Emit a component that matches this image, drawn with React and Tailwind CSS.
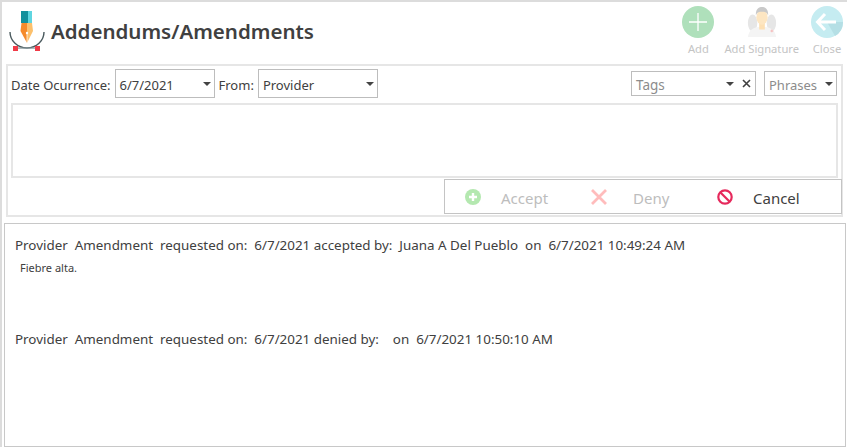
import React from 'react';

const font = { fontFamily: '"Noto Sans", "Open Sans", sans-serif' };

function PenLogo() {
  return (
    <svg width="36" height="42" viewBox="0 0 36 42" className="shrink-0">
      <path d="M1 21 A17 16 0 0 0 35 21" fill="none" stroke="#4a5a5e" strokeWidth="1.4" />
      <rect x="12" y="0" width="7" height="12" fill="#12909c" />
      <rect x="19" y="0" width="4" height="12" fill="#5fd5e0" />
      <path d="M12.5 12 H18 V32 L11.5 20 Z" fill="#f58a2a" />
      <path d="M18 12 H23 L24 20 L18 32 Z" fill="#fcc06c" />
      <path d="M18 22 V32" stroke="#fff" strokeWidth="0.7" />
      <circle cx="18" cy="22" r="1.2" fill="#fff" />
      <rect x="7" y="36.5" width="22" height="1.2" fill="#8a9a9e" />
      <rect x="4" y="35" width="5" height="5" fill="#f03a47" />
      <rect x="26" y="35" width="5" height="5" fill="#f03a47" />
    </svg>
  );
}

function DoctorIcon() {
  return (
    <svg width="32" height="32" viewBox="0 0 34 34">
      <ellipse cx="7" cy="18" rx="5" ry="9" fill="#e6e6e6" />
      <ellipse cx="27" cy="18" rx="5" ry="9" fill="#e6e6e6" />
      <path d="M2 33 C3 24 10 22 17 22 C24 22 31 24 32 33 Z" fill="#f4f4f4" />
      <rect x="14" y="16" width="6" height="9" fill="#fde0b4" />
      <ellipse cx="17" cy="12" rx="6" ry="8" fill="#fde6c2" />
      <path d="M10.5 10 C10 3 14 1 17 1 C20 1 24 3 23.5 10 C22 6 20 6 17 6 C14 6 12 6 10.5 10 Z" fill="#c9c9c9" />
      <path d="M26 26 h1 v-1 h1 v1 h1 v1 h-1 v1 h-1 v-1 h-1 Z" fill="#f5b5b5" />
    </svg>
  );
}

function ToolButton({ label, children, className = '' }) {
  return (
    <div className={`flex flex-col items-center gap-[3px] text-[11.2px] leading-[16px] text-[#c4c4c4] ${className}`}>
      {children}
      <span>{label}</span>
    </div>
  );
}

function Caret() {
  return <span className="w-0 h-0 border-x-[4px] border-x-transparent border-t-[4px] border-t-[#444]" />;
}

function Select({ value, className, muted }) {
  return (
    <div className={`flex items-center justify-between pl-[4px] pr-[3px] border border-[#bdbdbd] text-[13px] ${muted ? 'text-[#8c8c8c]' : 'text-[#404040]'} ${className}`}>
      <span className="pt-[4px]">{value}</span>
      <Caret />
    </div>
  );
}

function ActionButton({ icon, label, className, iconWidth = 'w-[36px]' }) {
  return (
    <div className={`flex items-center ${className}`}>
      <span className={`${iconWidth} flex`}>{icon}</span>
      <span className="pt-[4px]">{label}</span>
    </div>
  );
}

export default function App() {
  return (
    <div style={font} className="w-[847px] h-[447px] overflow-hidden bg-white border-t-2 border-l-2 border-[#dcdcdc] flex flex-col text-[#404040]">
      <header className="h-[62px] shrink-0 flex items-start justify-between pr-[4px]">
        <div className="flex items-center gap-[6px] pl-[7px] pt-[9px]">
          <PenLogo />
          <h1 className="mb-[2px] text-[20.5px] font-semibold leading-[30px] text-[#404040]">Addendums/Amendments</h1>
        </div>
        <div className="flex items-start pt-[4px]">
          <ToolButton label="Add" className="mr-[10px]">
            <svg width="32" height="32" viewBox="0 0 32 32">
              <circle cx="16" cy="16" r="16" fill="#afe0bb" />
              <path d="M16 7V25M7 16H25" stroke="#fff" strokeWidth="1.3" />
            </svg>
          </ToolButton>
          <ToolButton label="Add Signature" className="mr-[12px]">
            <DoctorIcon />
          </ToolButton>
          <ToolButton label="Close">
            <svg width="32" height="32" viewBox="0 0 32 32">
              <circle cx="16" cy="16" r="16" fill="#c5ecf1" />
              <path d="M16 16 L32 16 A16 16 0 0 1 24 30 Z" fill="#b5dfe5" />
              <path d="M14 8 L6.5 16 L14 24 M7 16 H25" fill="none" stroke="#fff" strokeWidth="3" />
            </svg>
          </ToolButton>
        </div>
      </header>

      <section className="ml-[4px] mr-[4px] h-[153px] shrink-0 border-2 border-[#e6e6e6] px-[3px] pt-[3px] flex flex-col">
        <div className="flex items-center text-[13px]">
          <span className="mr-[4px] pt-[4px]">Date Ocurrence:</span>
          <Select value="6/7/2021" className="w-[100px] h-[29px]" />
          <span className="ml-[4px] mr-[4px] pt-[4px]">From:</span>
          <Select value="Provider" className="w-[120px] h-[29px]" />
          <div className="ml-auto flex items-center gap-[8px] pr-[1px]">
            <div className="w-[125px] h-[25px] flex items-center justify-between pl-[4px] pr-[4px] border border-[#bdbdbd] text-[13.5px] text-[#8c8c8c]">
              <span className="pt-[4px]">Tags</span>
              <span className="flex items-center gap-[8px]">
                <Caret />
                <svg width="9" height="9" viewBox="0 0 9 9">
                  <path d="M1 1L8 8M8 1L1 8" stroke="#404040" strokeWidth="1.6" />
                </svg>
              </span>
            </div>
            <Select value="Phrases" muted className="w-[73px] h-[25px]" />
          </div>
        </div>
        <div className="mt-[5px] h-[75px] shrink-0 border-2 border-[#e6e6e6]" />
        <div className="mt-[1px] ml-[433px] w-[398px] h-[35px] shrink-0 border border-[#c4c4c4] flex items-center text-[15px] pl-[20px]">
          <ActionButton
            className="text-[#bdbdbd] w-[126px]"
            label="Accept"
            icon={
              <svg width="16" height="16" viewBox="0 0 16 16">
                <circle cx="8" cy="8" r="8" fill="#b4e8b0" />
                <path d="M8 4V12M4 8H12" stroke="#fff" strokeWidth="2.4" />
              </svg>
            }
          />
          <ActionButton
            className="text-[#bdbdbd] w-[126px]"
            iconWidth="w-[42px]"
            label="Deny"
            icon={
              <svg width="16" height="16" viewBox="0 0 16 16">
                <path d="M1 1L15 15M15 1L1 15" stroke="#ffbcbc" strokeWidth="2.8" />
              </svg>
            }
          />
          <ActionButton
            className="text-[#404040]"
            label="Cancel"
            icon={
              <svg width="16" height="16" viewBox="0 0 16 16">
                <circle cx="8" cy="8" r="6.7" fill="none" stroke="#e6295c" strokeWidth="2.2" />
                <path d="M3.5 3.5L12.5 12.5" stroke="#e6295c" strokeWidth="2.2" />
              </svg>
            }
          />
        </div>
      </section>

      <section className="mt-[6px] ml-[2px] mr-[1px] flex-1 border border-[#c8c8c8] pl-[10px] pt-[12px] text-[13.4px] whitespace-pre">
        <p className="leading-[18px]">Provider  Amendment  requested on:  6/7/2021 accepted by:  Juana A Del Pueblo  on  6/7/2021 10:49:24 AM</p>
        <p className="mt-[7px] ml-[5px] text-[11px] leading-[14px]">Fiebre alta.</p>
        <p className="mt-[55px] leading-[18px]">Provider  Amendment  requested on:  6/7/2021 denied by:    on  6/7/2021 10:50:10 AM</p>
      </section>
    </div>
  );
}
